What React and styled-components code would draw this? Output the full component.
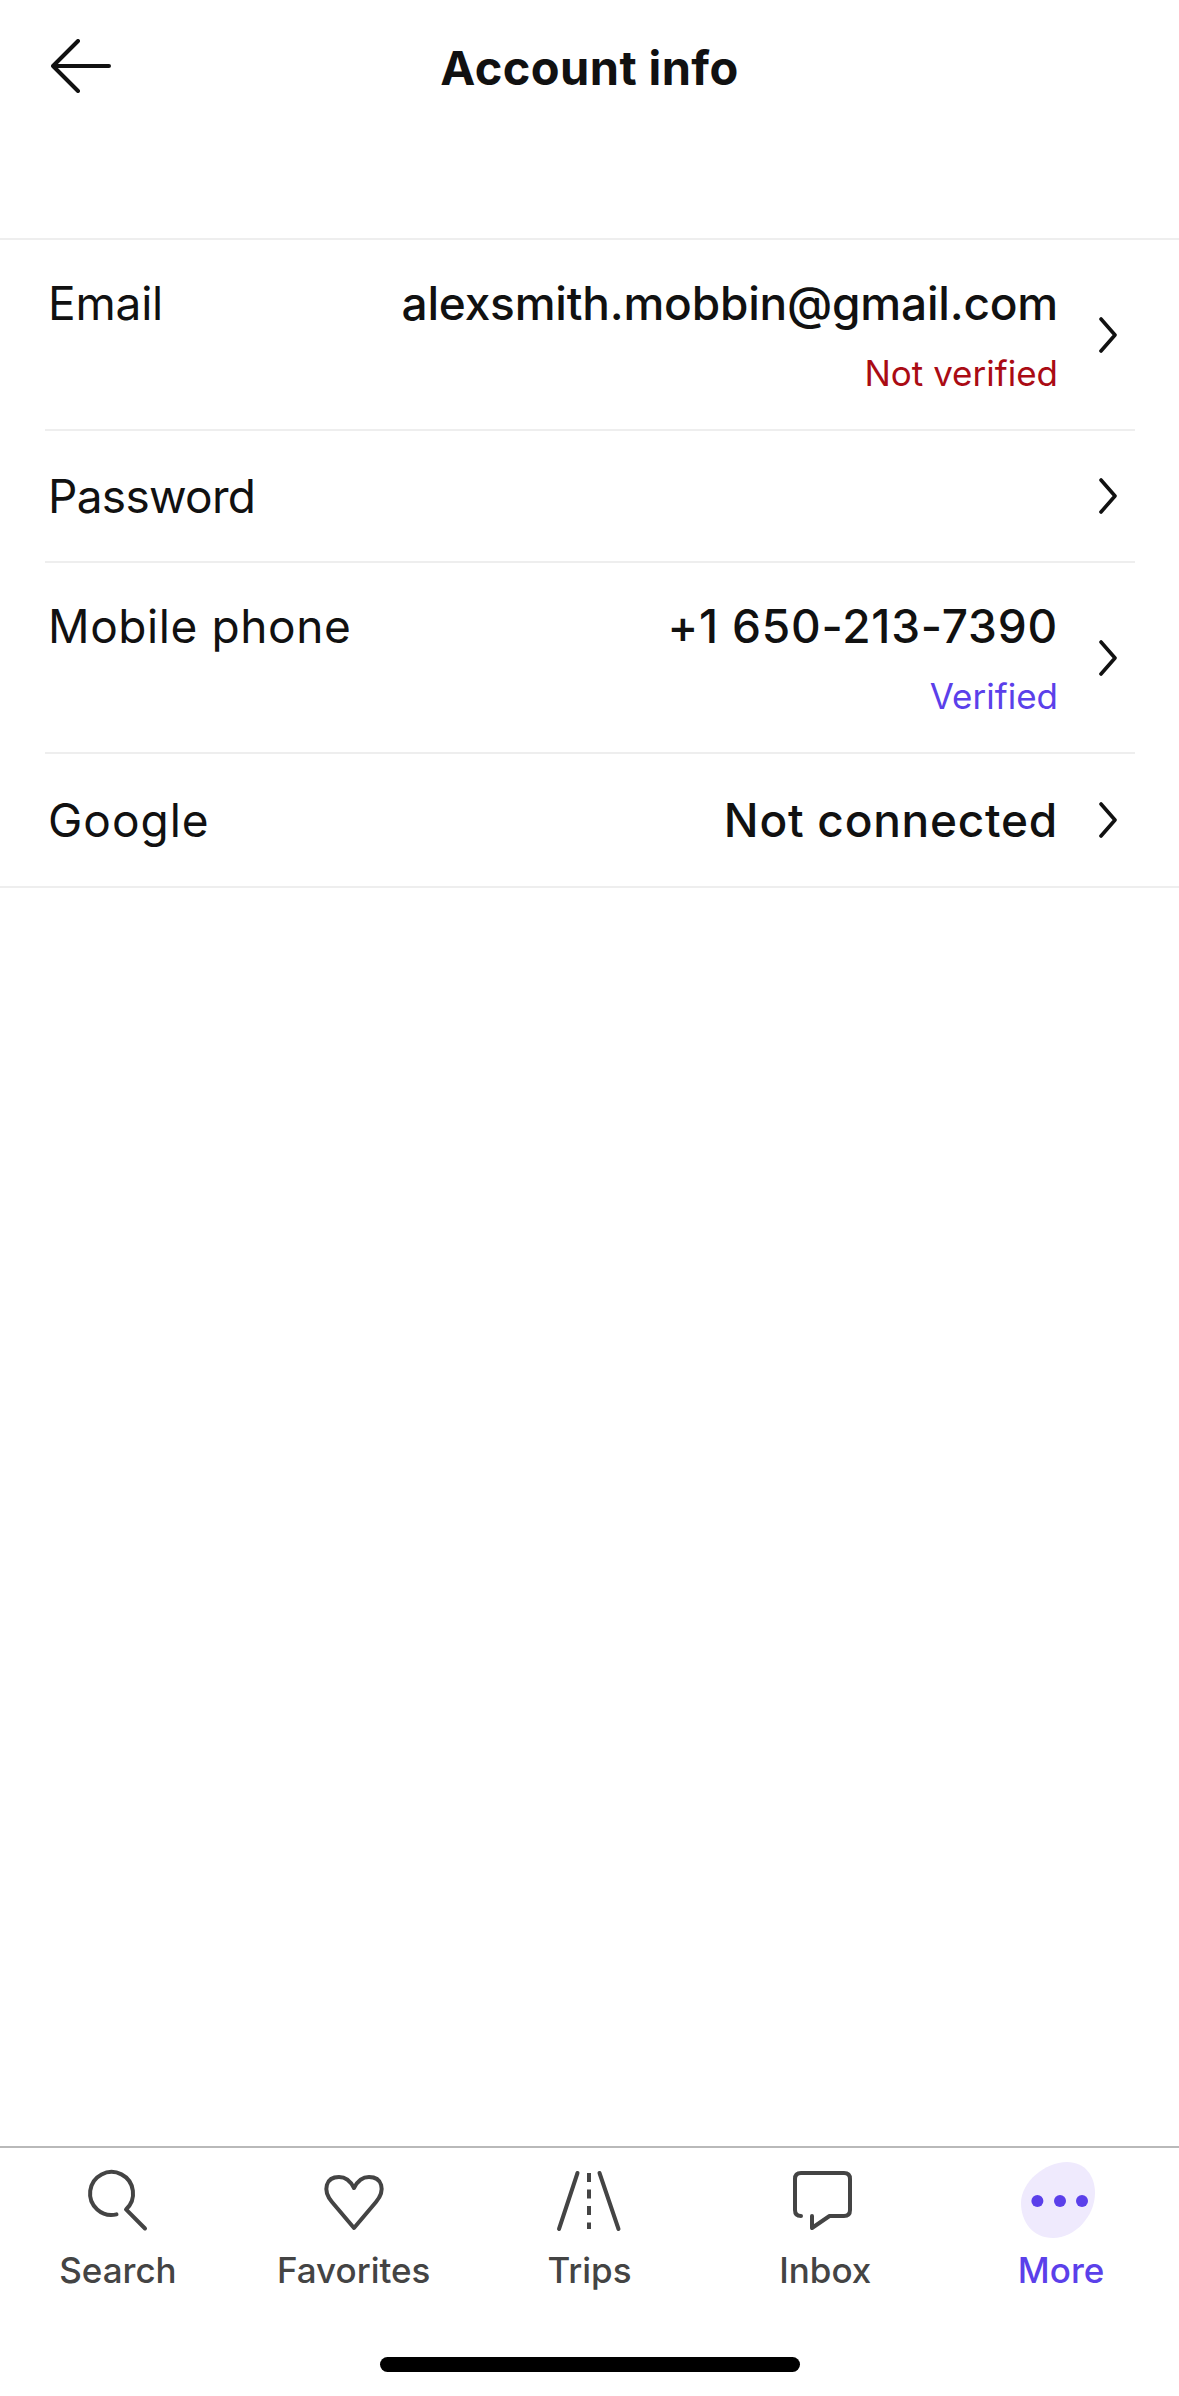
import React from 'react';
import styled, { createGlobalStyle } from 'styled-components';

const GlobalStyle = createGlobalStyle`
  html, body {
    margin: 0;
    padding: 0;
    background: #fff;
  }

  * {
    box-sizing: border-box;
  }
`;

const rows = [
  { label: 'Email', labelTracking: -0.2, value: 'alexsmith.mobbin@gmail.com', note: 'Not verified', noteColor: '#aa0b14', valueTracking: -0.2 },
  { label: 'Password', labelTracking: -0.7 },
  { label: 'Mobile phone', labelTracking: 0.6, value: '+1 650-213-7390', note: 'Verified', noteColor: '#5b40ea', valueTracking: 0.8 },
  { label: 'Google', labelTracking: 1, value: 'Not connected', valueTracking: 0.75 },
];

const tabs = [
  { label: 'Search', icon: <SearchIcon /> },
  { label: 'Favorites', icon: <HeartIcon /> },
  { label: 'Trips', icon: <RoadIcon /> },
  { label: 'Inbox', icon: <BubbleIcon /> },
  { label: 'More', icon: <MoreIcon />, active: true },
];

function BackIcon() {
  return (
    <svg width="60" height="54" viewBox="0 0 60 54" fill="none" stroke="#111" strokeWidth="4" strokeLinecap="round" strokeLinejoin="round">
      <path d="M58 27H2M27 2 2 27l25 25" />
    </svg>
  );
}

function Chevron() {
  return (
    <svg width="20" height="36" viewBox="0 0 20 36" fill="none" stroke="#111" strokeWidth="3.6" strokeLinecap="round" strokeLinejoin="round">
      <path d="M3 2 17 18 3 34" />
    </svg>
  );
}

function SearchIcon() {
  return (
    <TabSvg>
      <path d="M38.5 52.4A21.5 21.5 0 1 1 48 47.4L67 66.5" />
    </TabSvg>
  );
}

function HeartIcon() {
  return (
    <TabSvg>
      <path d="M40 66 18 40C8 28 12 15 25 15c7 0 12 5 15 11 3-6 8-11 15-11 13 0 17 13 7 25Z" />
    </TabSvg>
  );
}

function RoadIcon() {
  return (
    <TabSvg>
      <path d="M28.5 11 10 67M50.5 11 69.5 67" />
      <path d="M40 11V67" strokeDasharray="9 7.5" strokeLinecap="butt" />
    </TabSvg>
  );
}

function BubbleIcon() {
  return (
    <TabSvg>
      <path d="M16 54C12 54 10 52 10 48V17Q10 11 16 11H59Q65 11 65 17V48Q65 54 59 54H44.5L27 66V54" />
    </TabSvg>
  );
}

function MoreIcon() {
  return (
    <svg width="80" height="80" viewBox="0 0 80 80">
      <path d="M46 0C64 0 74 14 74 31 74 54 54 76 32 76 12 76 0 60 0 41 0 20 24 0 46 0Z" fill="#efeafd" />
      <circle cx="16.4" cy="39" r="6" fill="#5b40ea" />
      <circle cx="39" cy="39" r="6" fill="#5b40ea" />
      <circle cx="61" cy="39" r="6" fill="#5b40ea" />
    </svg>
  );
}

function TabSvg({ children }) {
  return (
    <svg width="80" height="80" viewBox="0 0 80 80" fill="none" stroke="#444" strokeWidth="4" strokeLinecap="round" strokeLinejoin="round">
      {children}
    </svg>
  );
}

export default function App() {
  return (
    <Page>
      <GlobalStyle />
      <Header>
        <BackButton>
          <BackIcon />
        </BackButton>
        <Title>Account info</Title>
      </Header>

      <List>
        {rows.map((row) => (
          <Row key={row.label} $tall={!!row.note}>
            <Label $tracking={row.labelTracking}>{row.label}</Label>
            <ValueGroup>
              {row.value && <Value $tracking={row.valueTracking}>{row.value}</Value>}
              {row.note && <Note $color={row.noteColor}>{row.note}</Note>}
            </ValueGroup>
            <ChevronBox $tall={!!row.note}>
              <Chevron />
            </ChevronBox>
          </Row>
        ))}
      </List>

      <Spacer />

      <TabBar>
        {tabs.map((tab) => (
          <Tab key={tab.label}>
            <IconBox>{tab.icon}</IconBox>
            <TabLabel $active={tab.active}>{tab.label}</TabLabel>
          </Tab>
        ))}
      </TabBar>
      <HomeArea>
        <HomeIndicator />
      </HomeArea>
    </Page>
  );
}

const Page = styled.div`
  display: flex;
  flex-direction: column;
  width: 1179px;
  height: 2396px;
  overflow: hidden;
  background: #fff;
  font-family: Inter, 'Liberation Sans', sans-serif;
  color: #111;
`;

const Header = styled.header`
  display: grid;
  grid-template-columns: 1fr auto 1fr;
  align-items: start;
  height: 238px;
  padding-top: 39px;
`;

const BackButton = styled.div`
  display: flex;
  padding-left: 51px;
`;

const Title = styled.h1`
  margin: 2px 0 0;
  font-size: 47px;
  line-height: 54px;
  font-weight: 700;
  letter-spacing: 0.4px;
`;

const List = styled.section`
  display: flex;
  flex-direction: column;
  border-top: 2px solid #eeeeee;
  border-bottom: 2px solid #eeeeee;
`;

const Row = styled.div`
  display: flex;
  align-items: ${(props) => (props.$tall ? 'flex-start' : 'center')};
  justify-content: space-between;
  height: ${(props) => (props.$tall ? '191px' : '132px')};
  margin: 0 44px 0 45px;
  padding: ${(props) => (props.$tall ? '36px 17px 0 3px' : '0 17px 0 3px')};
  border-bottom: 2px solid #eeeeee;

  &:last-child {
    border-bottom: 0;
  }
`;

const Label = styled.div`
  font-size: 46px;
  line-height: 54px;
  font-weight: 400;
  letter-spacing: ${(props) => props.$tracking || 0}px;
`;

const ValueGroup = styled.div`
  display: flex;
  flex-direction: column;
  align-items: flex-end;
  margin-left: auto;
  margin-right: 40px;
`;

const Value = styled.div`
  font-size: 46px;
  line-height: 54px;
  font-weight: 500;
  letter-spacing: ${(props) => props.$tracking || 0}px;
`;

const Note = styled.div`
  margin-top: 22px;
  font-size: 35px;
  line-height: 42px;
  font-weight: 400;
  color: ${(props) => props.$color};
`;

const ChevronBox = styled.div`
  display: flex;
  align-self: center;
  margin-top: ${(props) => (props.$tall ? '-36px' : '0')};
`;

const Spacer = styled.div`
  flex: 1;
`;

const TabBar = styled.nav`
  display: grid;
  grid-template-columns: repeat(5, 1fr);
  padding-top: 14px;
  border-top: 2px solid #b9b9b9;
`;

const Tab = styled.div`
  display: flex;
  flex-direction: column;
  align-items: center;
`;

const IconBox = styled.div`
  display: flex;
  height: 80px;
`;

const TabLabel = styled.span`
  margin-top: 8px;
  font-size: 35px;
  line-height: 40px;
  font-weight: 500;
  color: ${(props) => (props.$active ? '#5b40ea' : '#444444')};
`;

const HomeArea = styled.div`
  display: flex;
  justify-content: center;
  padding: 67px 0 24px;
`;

const HomeIndicator = styled.div`
  width: 420px;
  height: 15px;
  border-radius: 8px;
  background: #000;
`;
